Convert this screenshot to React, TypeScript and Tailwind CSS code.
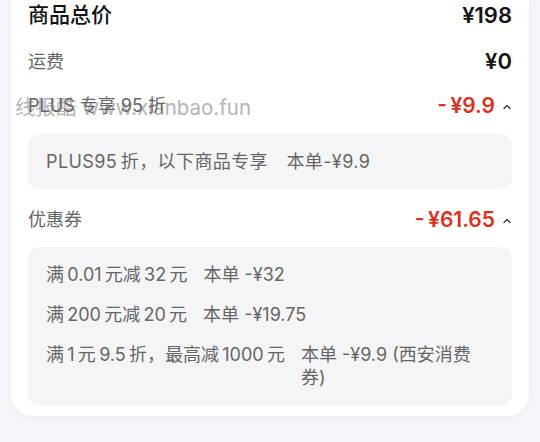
import React from 'react';

const font = { fontFamily: 'Inter, "Noto Sans CJK SC", sans-serif' };

const Chevron = () => (
  <svg width="10" height="8" viewBox="0 0 10 8" className="ml-[7px] mt-[2px]">
    <polyline points="2,5.5 5,2.5 8,5.5" fill="none" stroke="#333" strokeWidth="1.3" strokeLinecap="round" strokeLinejoin="round" />
  </svg>
);

const coupons = [
  { rule: '满\u20090.01\u2009元减\u200932\u2009元', amount: '本单 -¥32' },
  { rule: '满\u2009200\u2009元减\u200920\u2009元', amount: '本单 -¥19.75' },
  { rule: '满\u20091\u2009元\u20099.5\u2009折，最高减\u20091000\u2009元', amount: '本单 -¥9.9 (西安消费券)' },
];

const App = () => {
  return (
    <div className="w-[540px] h-[442px] bg-[#f4f5f9] overflow-hidden" style={font}>
      <div className="relative mx-[11px] w-[518px] mt-[-20px] bg-white rounded-[22px] px-[17px] pt-[20px] pb-[10px] shadow-[0_2px_6px_rgba(0,0,0,0.03)]">
        {/* watermark */}
        <div className="absolute left-[4px] top-[113px] text-[20.5px] text-[#b4b4b4] pointer-events-none whitespace-nowrap">
          线报酷 www.xianbao.fun
        </div>

        {/* Total */}
        <div className="flex items-center justify-between h-[30px]">
          <span className="text-[21px] font-medium text-[#141414]">商品总价</span>
          <span className="text-[22px] font-semibold text-[#141414]">¥198</span>
        </div>

        {/* Shipping */}
        <div className="flex items-center justify-between h-[46px] mt-[8px]">
          <span className="text-[18px] text-[#666]">运费</span>
          <span className="text-[22px] font-semibold text-[#141414]">¥0</span>
        </div>

        {/* PLUS */}
        <div className="relative flex items-center justify-between h-[42px] pt-[1px]">
          <span className="text-[18px] text-[#666]">PLUS 专享 95 折</span>
          <div className="flex items-center">
            <span className="text-[21px] font-semibold text-[#d8321f]">-&thinsp;¥9.9</span>
            <Chevron />
          </div>
        </div>
        <div className="mt-[8px] bg-[#f5f5f8] rounded-[12px] px-[18px] py-[16px] text-[18px] leading-[23px] tracking-[0.4px] text-[#666]">
          PLUS95&thinsp;折，以下商品专享　本单-¥9.9
        </div>

        {/* Coupons */}
        <div className="flex items-center justify-between h-[58px] pt-[3px]">
          <span className="text-[18px] text-[#666]">优惠券</span>
          <div className="flex items-center">
            <span className="text-[21px] font-semibold text-[#d8321f]">-&thinsp;¥61.65</span>
            <Chevron />
          </div>
        </div>
        <div className="bg-[#f5f5f8] rounded-[12px] px-[18px] pt-[16px] pb-[17px] text-[18px] leading-[23px] text-[#666] flex flex-col gap-[17px]">
          {coupons.map((c) => (
            <div key={c.rule} className="flex gap-[16px]">
              <span className="shrink-0">{c.rule}</span>
              <span>{c.amount}</span>
            </div>
          ))}
        </div>
      </div>
    </div>
  );
};

export default App;
